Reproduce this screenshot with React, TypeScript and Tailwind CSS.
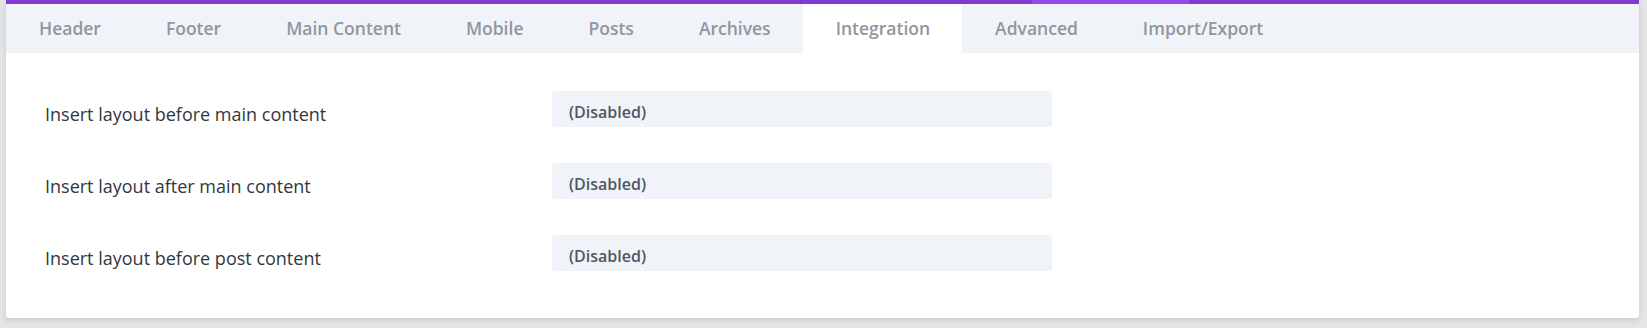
import React from "react";

const tabs = [
  "Header",
  "Footer",
  "Main Content",
  "Mobile",
  "Posts",
  "Archives",
  "Integration",
  "Advanced",
  "Import/Export",
];

const rows = [
  "Insert layout before main content",
  "Insert layout after main content",
  "Insert layout before post content",
];

export default function App() {
  return (
    <div
      className="w-[1647px] h-[328px] bg-[#e5e5e5] pl-[6px] pr-[8px] overflow-hidden"
      style={{ fontFamily: '"Open Sans", "Noto Sans", sans-serif' }}
    >
      <div className="bg-white rounded-b-[3px] shadow-[0_2px_6px_rgba(0,0,0,0.12)] h-[318px] flex flex-col">
        <div className="flex h-[4px] w-full">
          <div className="w-[1026px] bg-[#7e3bd0]" />
          <div className="w-[157px] bg-[#9648e8]" />
          <div className="flex-1 bg-[#7e3bd0]" />
        </div>
        <div className="flex h-[49px] bg-[#f0f4f8]">
          {tabs.map((t) => (
            <div
              key={t}
              className={`pl-[33px] pr-[32px] flex items-center text-[17.5px] font-semibold text-[#8f979f] ${
                t === "Integration" ? "bg-white" : ""
              }`}
            >
              {t}
            </div>
          ))}
        </div>
        <div className="flex flex-col gap-[36px] pt-[38px] pl-[39px]">
          {rows.map((r) => (
            <div key={r} className="flex items-center">
              <div className="w-[507px] text-[18px] text-[#32373c] leading-[24px] pt-[9px]">
                {r}
              </div>
              <div className="w-[500px] h-[36px] rounded-[3px] bg-[#f0f4f8] flex items-center pl-[17px] pt-[6px] text-[16px] font-semibold text-[#4c5866]">
                (Disabled)
              </div>
            </div>
          ))}
        </div>
      </div>
    </div>
  );
}
